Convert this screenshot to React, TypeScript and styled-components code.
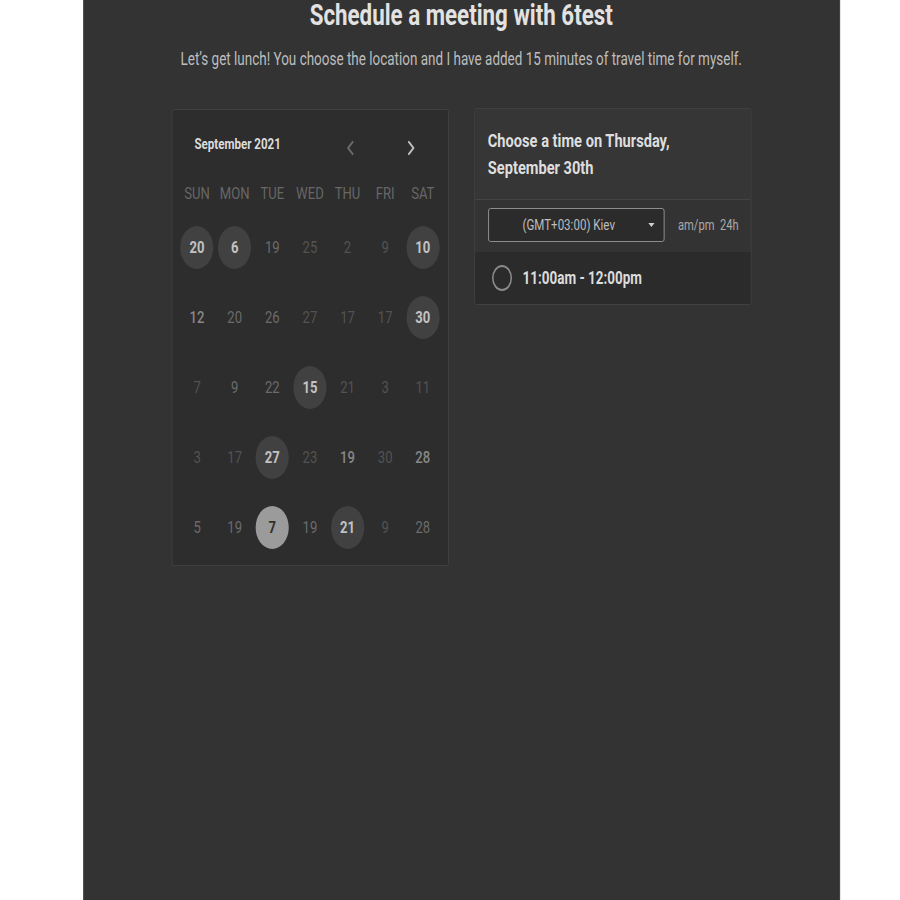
import React from "react";
import styled, { createGlobalStyle } from "styled-components";

const GlobalStyle = createGlobalStyle`
  html, body {
    margin: 0;
    padding: 0;
    background: #ffffff;
    overflow: hidden;
  }
`;

const Stage = styled.div`
  width: 1169px;
  transform: scaleX(0.77);
  transform-origin: 0 0;
  font-family: Roboto, "Noto Sans", sans-serif;
`;

const Panel = styled.main`
  margin-left: 108px;
  width: 982px;
  min-height: 900px;
  background: #333333;
  border-right: 1px solid #4a4a4a;
  display: flex;
  flex-direction: column;
  align-items: center;
`;

const Title = styled.h1`
  margin: 0;
  font-size: 29px;
  line-height: 30px;
  font-weight: 700;
  color: #e2e2e2;
  text-align: center;
`;

const Subtitle = styled.p`
  margin: 19px 0 0;
  font-size: 17.5px;
  line-height: 20px;
  color: #bdbdbd;
  text-align: center;
`;

const Cards = styled.div`
  margin-top: 39px;
  display: flex;
  align-items: flex-start;
  gap: 33px;
`;

const Card = styled.section`
  width: 360px;
  box-sizing: border-box;
  background: #2d2d2d;
  border: 1px solid #424242;
  border-radius: 3px;
  overflow: hidden;
`;

const CalendarCard = styled(Card)`
  height: 457px;
  margin-top: 1px;
`;

const CalHeader = styled.div`
  height: 68px;
  display: flex;
  align-items: center;
  padding: 0 28px 0 29px;
`;

const MonthLabel = styled.div`
  font-size: 15px;
  font-weight: 700;
  color: #dcdcdc;
`;

const Nav = styled.div`
  margin-left: auto;
  display: flex;
  gap: 39px;
  padding-top: 8px;
`;

const NavButton = styled.button<{ $active?: boolean }>`
  width: 40px;
  height: 24px;
  padding: 0;
  border: none;
  background: transparent;
  display: flex;
  align-items: center;
  justify-content: center;
  color: ${(p) => (p.$active ? "#bdbdbd" : "#6a6a6a")};
`;

const WeekRow = styled.div`
  display: grid;
  grid-template-columns: repeat(7, 1fr);
  margin: 0 8px;
  height: 30px;
  align-items: center;
`;

const DayName = styled.div`
  text-align: center;
  font-size: 17px;
  color: #676767;
`;

const DateGrid = styled.div`
  display: grid;
  grid-template-columns: repeat(7, 1fr);
  grid-auto-rows: 70px;
  margin: 4px 8px 0;
`;

const DayCell = styled.div`
  display: flex;
  align-items: center;
  justify-content: center;
`;

type Tone = "dim" | "mid" | "bright" | "open" | "selected";

const Bubble = styled.div<{ $tone: Tone }>`
  width: 43px;
  height: 43px;
  border-radius: 50%;
  display: flex;
  align-items: center;
  justify-content: center;
  font-size: 17px;
  font-weight: ${(p) =>
    p.$tone === "open" || p.$tone === "selected" ? 700 : p.$tone === "bright" ? 500 : 400};
  background: ${(p) =>
    p.$tone === "open" ? "#414141" : p.$tone === "selected" ? "#9b9b9b" : "transparent"};
  color: ${(p) =>
    ({
      dim: "#535353",
      mid: "#6b6b6b",
      bright: "#888888",
      open: "#c2c2c2",
      selected: "#2f2f2f",
    })[p.$tone]};
`;

const TimeCard = styled(Card)`
  background: #333333;
`;

const TimeHeader = styled.div`
  padding: 18px 17px 18px;
  background: #363636;
  border-bottom: 1px solid #444444;
  font-size: 19px;
  line-height: 27px;
  font-weight: 700;
  color: #dedede;
`;

const ZoneRow = styled.div`
  display: flex;
  align-items: center;
  padding: 8px 17px 10px;
  gap: 18px;
`;

const ZoneSelect = styled.div`
  flex-shrink: 0;
  width: 229px;
  height: 34px;
  box-sizing: border-box;
  border: 1px solid #9a9a9a;
  border-radius: 3px;
  background: #2b2b2b;
  display: flex;
  align-items: center;
  padding: 0 12px 0 44px;
  font-size: 15px;
  color: #bdbdbd;
`;

const ZoneText = styled.span`
  flex: 1;
`;

const Caret = styled.span`
  width: 0;
  height: 0;
  border-left: 4px solid transparent;
  border-right: 4px solid transparent;
  border-top: 4px solid #cfcfcf;
`;

const FormatToggle = styled.div`
  display: flex;
  gap: 7px;
  font-size: 14.5px;
  color: #a9a9a9;
  white-space: nowrap;
`;

const SlotRow = styled.div`
  height: 52px;
  display: flex;
  align-items: center;
  padding: 0 22px;
  gap: 14px;
  background: #2b2b2b;
`;

const Radio = styled.span`
  width: 26px;
  height: 26px;
  box-sizing: border-box;
  border: 2px solid #8a8a8a;
  border-radius: 50%;
`;

const SlotLabel = styled.span`
  font-size: 17.5px;
  font-weight: 700;
  color: #dcdcdc;
`;

const Chevron = ({ dir }: { dir: "left" | "right" }) => (
  <svg width="10" height="16" viewBox="0 0 10 16" fill="none">
    <path
      d={dir === "left" ? "M8 2 L2 8 L8 14" : "M2 2 L8 8 L2 14"}
      stroke="currentColor"
      strokeWidth="2.4"
      strokeLinecap="round"
      strokeLinejoin="round"
    />
  </svg>
);

const days = ["SUN", "MON", "TUE", "WED", "THU", "FRI", "SAT"];

const weeks: [number, Tone][][] = [
  [[20, "open"], [6, "open"], [19, "mid"], [25, "dim"], [2, "dim"], [9, "dim"], [10, "open"]],
  [[12, "bright"], [20, "mid"], [26, "mid"], [27, "dim"], [17, "dim"], [17, "dim"], [30, "open"]],
  [[7, "dim"], [9, "mid"], [22, "mid"], [15, "open"], [21, "dim"], [3, "dim"], [11, "dim"]],
  [[3, "dim"], [17, "dim"], [27, "open"], [23, "dim"], [19, "bright"], [30, "dim"], [28, "bright"]],
  [[5, "mid"], [19, "mid"], [7, "selected"], [19, "mid"], [21, "open"], [9, "dim"], [28, "mid"]],
];

export default function App() {
  return (
    <>
      <GlobalStyle />
      <Stage>
        <Panel>
          <Title>Schedule a meeting with 6test</Title>
          <Subtitle>
            Let’s get lunch! You choose the location and I have added 15 minutes of travel time for myself.
          </Subtitle>
          <Cards>
            <CalendarCard>
              <CalHeader>
                <MonthLabel>September 2021</MonthLabel>
                <Nav>
                  <NavButton aria-label="Previous month">
                    <Chevron dir="left" />
                  </NavButton>
                  <NavButton $active aria-label="Next month">
                    <Chevron dir="right" />
                  </NavButton>
                </Nav>
              </CalHeader>
              <WeekRow>
                {days.map((d) => (
                  <DayName key={d}>{d}</DayName>
                ))}
              </WeekRow>
              <DateGrid>
                {weeks.flat().map(([n, tone], i) => (
                  <DayCell key={i}>
                    <Bubble $tone={tone}>{n}</Bubble>
                  </DayCell>
                ))}
              </DateGrid>
            </CalendarCard>
            <TimeCard>
              <TimeHeader>
                Choose a time on Thursday,
                <br />
                September 30th
              </TimeHeader>
              <ZoneRow>
                <ZoneSelect>
                  <ZoneText>(GMT+03:00) Kiev</ZoneText>
                  <Caret />
                </ZoneSelect>
                <FormatToggle>
                  <span>am/pm</span>
                  <span>24h</span>
                </FormatToggle>
              </ZoneRow>
              <SlotRow>
                <Radio />
                <SlotLabel>11:00am - 12:00pm</SlotLabel>
              </SlotRow>
            </TimeCard>
          </Cards>
        </Panel>
      </Stage>
    </>
  );
}
